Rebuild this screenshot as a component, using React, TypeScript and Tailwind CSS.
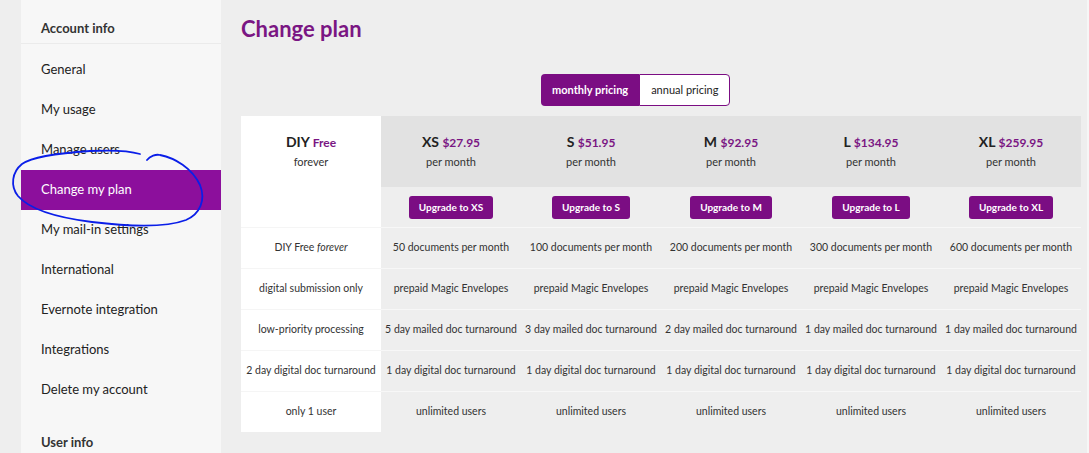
import React from "react";

const font = { fontFamily: 'Lato, "Open Sans", sans-serif' };

const navItems = [
  "General",
  "My usage",
  "Manage users",
  "Change my plan",
  "My mail-in settings",
  "International",
  "Evernote integration",
  "Integrations",
  "Delete my account",
];

const plans = [
  { name: "XS", price: "$27.95", docs: 50, mailed: 5 },
  { name: "S", price: "$51.95", docs: 100, mailed: 3 },
  { name: "M", price: "$92.95", docs: 200, mailed: 2 },
  { name: "L", price: "$134.95", docs: 300, mailed: 1 },
  { name: "XL", price: "$259.95", docs: 600, mailed: 1 },
];

const diyRows: React.ReactNode[] = [
  <span>
    DIY Free <em>forever</em>
  </span>,
  "digital submission only",
  "low-priority processing",
  "2 day digital doc turnaround",
  "only 1 user",
];

function planRow(i: number, p: (typeof plans)[number]) {
  switch (i) {
    case 0:
      return `${p.docs} documents per month`;
    case 1:
      return "prepaid Magic Envelopes";
    case 2:
      return `${p.mailed} day mailed doc turnaround`;
    case 3:
      return "1 day digital doc turnaround";
    default:
      return "unlimited users";
  }
}

function Sidebar() {
  return (
    <aside className="relative ml-[21px] w-[200px] shrink-0 bg-[#f7f7f7] text-[13px] text-[#222]">
      <div className="flex h-[44px] items-start border-b border-[#ebebeb] px-5 pt-[19px] font-bold text-[#333]">
        Account info
      </div>
      <ul className="pt-[6px] pb-[4px]">
        {navItems.map((item) => (
          <li
            key={item}
            className={
              item === "Change my plan"
                ? "flex h-10 items-center bg-[#8c0f9c] px-5 text-white"
                : "flex h-10 items-center px-5"
            }
          >
            {item}
          </li>
        ))}
      </ul>
      <div className="flex h-[44px] items-start px-5 pt-[19px] font-bold text-[#333]">
        User info
      </div>
      {/* hand-drawn annotation */}
      <svg
        className="pointer-events-none absolute left-[-21px] top-0 h-[240px] w-[240px]"
        viewBox="0 0 240 240"
        fill="none"
      >
        <path
          d="M147 160 C150 156 156 154 160 155 C175 158 192 168 200 185 C206 200 200 214 186 220 C165 228 125 226 92 222 C60 218 30 210 18 196 C10 186 12 172 22 164 C32 157 60 153 90 151 C110 150 130 151 140 154"
          stroke="#0a1ee8"
          strokeWidth="1.8"
          strokeLinecap="round"
        />
      </svg>
    </aside>
  );
}

export default function App() {
  return (
    <div className="flex h-[453px] overflow-hidden bg-[#eeeeee]" style={font}>
      <Sidebar />
      <main className="ml-5 w-[840px]">
        <h1 className="mt-[14px] text-[22px] font-bold leading-[30px] text-[#7a1683]">
          Change plan
        </h1>
        <div className="ml-[300px] mt-[30px] flex h-8 w-fit text-[11px]">
          <button className="rounded-l-[4px] bg-[#7b0d83] px-[11px] font-bold text-white">
            monthly pricing
          </button>
          <button className="rounded-r-[4px] border border-[#7b0d83] bg-white px-[11px] text-[#222]">
            annual pricing
          </button>
        </div>
        <div className="mt-[10px] grid grid-cols-[repeat(6,140px)] text-[10.5px] text-[#333]">
          {/* header */}
          <div className="row-span-2 bg-white pt-[16px] text-center">
            <div className="text-[14px] font-bold leading-5 text-[#222]">
              DIY <span className="text-[12px] font-bold text-[#7a1683]">Free</span>
            </div>
            <div className="mt-[1px] text-[11px] leading-4">forever</div>
          </div>
          {plans.map((p) => (
            <div key={p.name} className="h-[71px] bg-[#e2e2e2] pt-[16px] text-center">
              <div className="text-[14px] font-bold leading-5 text-[#222]">
                {p.name}{" "}
                <span className="text-[12px] font-bold text-[#7a1683]">{p.price}</span>
              </div>
              <div className="mt-[1px] text-[11px] leading-4">per month</div>
            </div>
          ))}
          {plans.map((p) => (
            <div key={p.name} className="flex h-10 items-center justify-center">
              <button className="h-[23px] rounded-[3px] bg-[#7b0d83] px-[10px] text-[10px] font-bold text-white">
                Upgrade to {p.name}
              </button>
            </div>
          ))}
          {diyRows.map((d, i) => (
            <React.Fragment key={i}>
              <div className="flex h-[41px] items-center justify-center whitespace-nowrap border-t border-[#f5f5f5] bg-white text-center">
                {d}
              </div>
              {plans.map((p) => (
                <div
                  key={p.name}
                  className="flex h-[41px] items-center justify-center whitespace-nowrap border-t border-[#f7f7f7] text-center"
                >
                  {planRow(i, p)}
                </div>
              ))}
            </React.Fragment>
          ))}
        </div>
      </main>
      <div className="ml-auto w-[2px] bg-[#f6f6f6]" />
    </div>
  );
}
